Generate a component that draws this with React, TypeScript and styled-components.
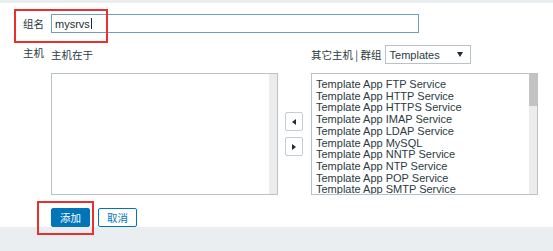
import React from 'react';
import styled, {createGlobalStyle} from 'styled-components';

const GlobalStyle = createGlobalStyle`
    html, body {
        margin: 0;
        padding: 0;
        background: #ffffff;
    }
    body {
        font-family: 'Liberation Sans', Arial, 'Noto Sans CJK SC', sans-serif;
        font-size: 11px;
        color: #1f2c33;
    }
`

const templates = [
    'Template App FTP Service',
    'Template App HTTP Service',
    'Template App HTTPS Service',
    'Template App IMAP Service',
    'Template App LDAP Service',
    'Template App MySQL',
    'Template App NNTP Service',
    'Template App NTP Service',
    'Template App POP Service',
    'Template App SMTP Service',
];

export default function App() {
    return (
        <Page>
            <GlobalStyle/>
            <TopStrip/>
            <Form>
                <Row $top={11}>
                    <Mark $left={14} $top={-5} $width={94} $height={34}/>
                    <Label $offset={0}>组名</Label>
                    <NameInput>
                        <span>mysrvs</span>
                        <Caret/>
                    </NameInput>
                </Row>
                <Row $top={12}>
                    <Label $offset={-2}>主机</Label>
                    <TwinBox>
                        <HeadCell>主机在于</HeadCell>
                        <span/>
                        <HeadCell>
                            其它主机 | 群组
                            <Select>
                                Templates
                                <SelectArrow/>
                            </Select>
                        </HeadCell>
                        <ListBox>
                            <ListItems/>
                            <Track/>
                        </ListBox>
                        <Mover>
                            <ArrowBtn><ArrowIcon $dir="left"/></ArrowBtn>
                            <ArrowBtn><ArrowIcon $dir="right"/></ArrowBtn>
                        </Mover>
                        <ListBox>
                            <ListItems>
                                {templates.map(t => <Item key={t}>{t}</Item>)}
                            </ListItems>
                            <Track>
                                <Thumb/>
                            </Track>
                        </ListBox>
                    </TwinBox>
                </Row>
                <Actions>
                    <Marked>
                        <Mark $left={-14} $top={-7} $width={57} $height={34}/>
                        <Button $primary>添加</Button>
                    </Marked>
                    <Button>取消</Button>
                </Actions>
            </Form>
            <BottomStrip/>
        </Page>
    );
}

const Page = styled.div`
    width: 553px;
    height: 251px;
    display: flex;
    flex-direction: column;
    overflow: hidden;
`
const TopStrip = styled.div`
    height: 3px;
    background: #ebeef0;
    flex-shrink: 0;
`
const BottomStrip = styled.div`
    flex: 1;
    background: #ebeef0;
`
const Form = styled.div`
    display: flex;
    flex-direction: column;
`
const Row = styled.div<{ $top: number }>`
    position: relative;
    display: grid;
    grid-template-columns: 51px auto;
    align-items: start;
    margin-top: ${p => p.$top}px;
`
const Label = styled.div<{ $offset: number }>`
    padding-left: 23px;
    margin-top: ${p => p.$offset}px;
    line-height: 19px;
    font-family: 'Noto Sans CJK SC', sans-serif;
    font-size: 10.5px;
    color: #2b3a42;
`
const Mark = styled.div<{ $left: number; $top: number; $width: number; $height: number }>`
    position: absolute;
    left: ${p => p.$left}px;
    top: ${p => p.$top}px;
    width: ${p => p.$width}px;
    height: ${p => p.$height}px;
    box-sizing: border-box;
    border: 2px solid #e8312f;
    pointer-events: none;
    z-index: 2;
`
const NameInput = styled.div`
    width: 368px;
    height: 19px;
    box-sizing: border-box;
    border: 1px solid #6f9fc0;
    padding: 0 3px;
    display: flex;
    align-items: center;
    font-size: 11px;
    color: #1f2c33;
`
const Caret = styled.span`
    width: 1px;
    height: 11px;
    background: #1f2c33;
    margin-left: 1px;
`
const TwinBox = styled.div`
    display: grid;
    grid-template-columns: 227px 33px 227px;
    grid-template-rows: 19px 122px;
    row-gap: 9px;
`
const HeadCell = styled.div`
    display: flex;
    align-items: center;
    gap: 3px;
    font-family: 'Noto Sans CJK SC', sans-serif;
    font-size: 10.5px;
    color: #2b3a42;
    white-space: nowrap;
`
const Select = styled.div`
    width: 86px;
    height: 19px;
    box-sizing: border-box;
    border: 1px solid #b7c3c9;
    display: flex;
    align-items: center;
    justify-content: space-between;
    padding: 0 7px 0 4px;
    font-family: 'Liberation Sans', Arial, sans-serif;
    font-size: 11px;
`
const SelectArrow = styled.span`
    width: 0;
    height: 0;
    border-left: 3px solid transparent;
    border-right: 3px solid transparent;
    border-top: 5px solid #1f2c33;
`
const ListBox = styled.div`
    display: flex;
    box-sizing: border-box;
    border: 1px solid #b7c3c9;
    overflow: hidden;
`
const ListItems = styled.div`
    flex: 1;
    padding: 5px 4px 0;
    display: flex;
    flex-direction: column;
`
const Item = styled.div`
    font-size: 11px;
    line-height: 11.7px;
    color: #2b3a42;
    white-space: nowrap;
`
const Track = styled.div`
    width: 8px;
    background: #ececec;
    display: flex;
    flex-direction: column;
`
const Thumb = styled.div`
    height: 32px;
    background: #c3c3c3;
`
const Mover = styled.div`
    display: flex;
    flex-direction: column;
    align-items: center;
    justify-content: center;
    gap: 6px;
    padding-right: 2px;
`
const ArrowBtn = styled.div`
    width: 18px;
    height: 19px;
    box-sizing: border-box;
    border: 1px solid #c4cdd2;
    border-radius: 2px;
    background: #ffffff;
    display: flex;
    align-items: center;
    justify-content: center;
`
const ArrowIcon = styled.span<{ $dir: 'left' | 'right' }>`
    width: 0;
    height: 0;
    border-top: 3px solid transparent;
    border-bottom: 3px solid transparent;
    ${p => p.$dir === 'left'
        ? 'border-right: 4px solid #1f2c33;'
        : 'border-left: 4px solid #1f2c33;'}
`
const Actions = styled.div`
    display: flex;
    gap: 8px;
    padding-left: 51px;
    margin-top: 13px;
    height: 19px;
`
const Marked = styled.div`
    position: relative;
    display: flex;
`
const Button = styled.div<{ $primary?: boolean }>`
    width: 39px;
    height: 19px;
    box-sizing: border-box;
    border-radius: 2px;
    border: 1px solid #0275b8;
    background: ${p => p.$primary ? '#0275b8' : '#ffffff'};
    color: ${p => p.$primary ? '#ffffff' : '#0275b8'};
    display: flex;
    align-items: center;
    justify-content: center;
    font-family: 'Noto Sans CJK SC', sans-serif;
    font-size: 10.5px;
`
